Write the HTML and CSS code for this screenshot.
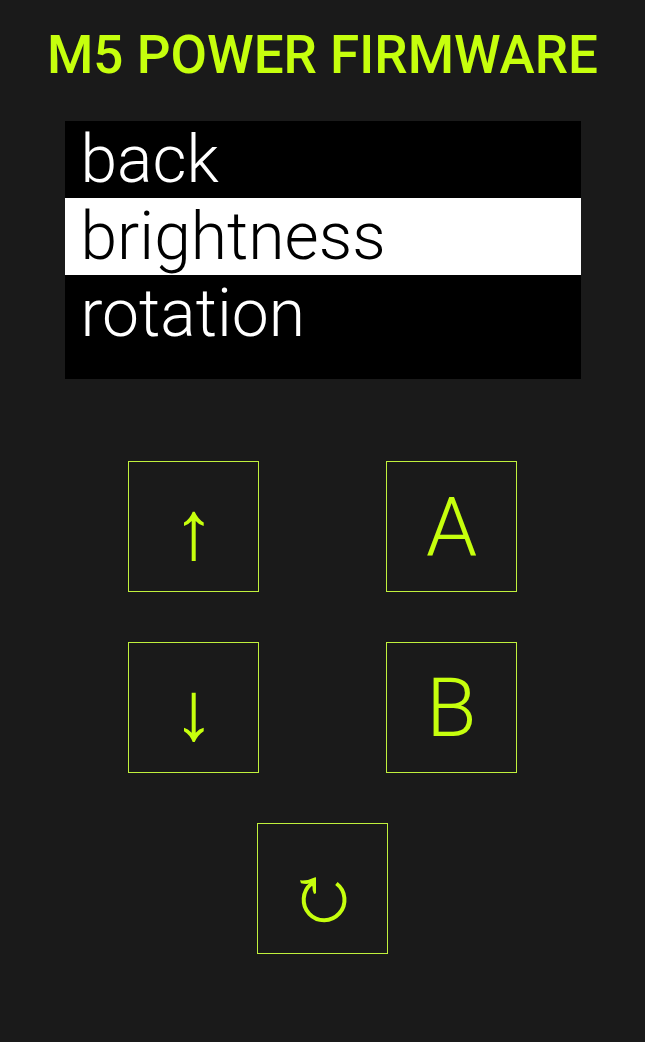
FILE: index.html
```html
<!DOCTYPE html>
<html lang="en">
<head>
<meta charset="utf-8">
<meta name="viewport" content="width=device-width, initial-scale=1">
<title>M5 Power Firmware</title>
<link rel="stylesheet" href="styles.css">
</head>
<body>
<main class="remote">
  <h1 class="title">M5 POWER FIRMWARE</h1>
  <ul class="screen">
    <li class="item">back</li>
    <li class="item selected">brightness</li>
    <li class="item">rotation</li>
  </ul>
  <div class="pad">
    <button class="key" type="button" aria-label="Up">
      <svg class="icon" viewBox="0 0 129 129"><path d="M63.7 49.7h2Q69 57 74.7 60.5V64Q70 63 66.7 59V99H62.7V59Q59 63 55 64V60.5Q61 57 63.7 49.7Z"/></svg>
    </button>
    <button class="key" type="button">A</button>
    <button class="key" type="button" aria-label="Down">
      <svg class="icon" viewBox="0 0 129 129"><path d="M63.7 99h2Q69 91.7 74.7 88.2V84.7Q70 85.7 66.7 89.7V49.7H62.7V89.7Q59 85.7 55 84.7V88.2Q61 91.7 63.7 99Z"/></svg>
    </button>
    <button class="key" type="button">B</button>
    <button class="key wide" type="button" aria-label="Rotate">
      <svg class="icon" viewBox="0 0 129 129"><path class="arc" d="M78.4 59.5A20.4 20.4 0 1 1 53.4 59.8"/><path d="M58 53.3L56.5 53.5Q50 57 42 56.3L43 59.2Q48 60.5 51.5 59.5L54.5 62.5Q54 66 56 70L58 69.3Z"/></svg>
    </button>
  </div>
</main>
</body>
</html>
```
FILE: styles.css
```css
* {
  box-sizing: border-box;
}

body {
  margin: 0;
  background: #1a1a1a;
  color: #c6ff0d;
  font-family: Roboto, sans-serif;
}

.remote {
  display: flex;
  flex-direction: column;
  align-items: center;
  padding-top: 25px;
}

.title {
  margin: 0;
  font-size: 53px;
  font-weight: 500;
  line-height: 60px;
  white-space: nowrap;
}

.screen {
  width: 80%;
  margin: 36px 0 0;
  padding: 0 0 27px;
  list-style: none;
  background: #000;
  color: #fff;
  font-size: 66px;
  font-weight: 300;
  line-height: 77px;
}

.item {
  padding: 0 16px;
}

.selected {
  background: #fff;
  color: #000;
}

.pad {
  display: grid;
  grid-template-columns: 1fr 1fr;
  justify-items: center;
  row-gap: 50px;
  width: 80%;
  margin-top: 82px;
}

.key {
  width: 131px;
  height: 131px;
  padding: 0;
  border: 1px solid #c0f03c;
  background: none;
  color: inherit;
  font: 300 82px/1 Roboto, sans-serif;
}

.wide {
  grid-column: 1 / -1;
}

.icon {
  display: block;
  width: 100%;
  height: 100%;
  fill: currentColor;
}

.arc {
  fill: none;
  stroke: currentColor;
  stroke-width: 4;
}
```
